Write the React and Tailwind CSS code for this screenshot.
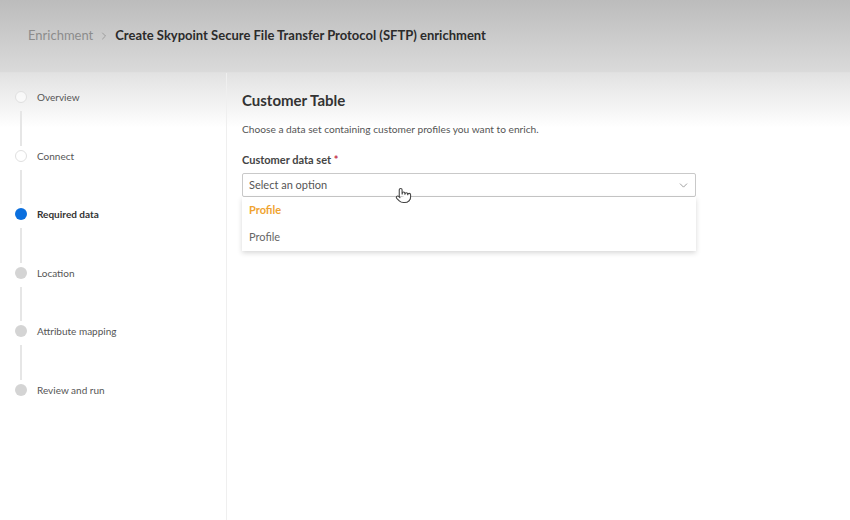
import React from "react";
import { ChevronDown, ChevronRight, Pointer } from "lucide-react";

const steps = [
  { label: "Overview", state: "done" },
  { label: "Connect", state: "done" },
  { label: "Required data", state: "active" },
  { label: "Location", state: "todo" },
  { label: "Attribute mapping", state: "todo" },
  { label: "Review and run", state: "todo" },
];

const StepDot = ({ state }) => {
  if (state === "active") {
    return <div className="h-3 w-3 shrink-0 rounded-full bg-[#0b6fde]" />;
  }
  if (state === "done") {
    return <div className="h-3 w-3 shrink-0 rounded-full border border-[#e0e0e0] bg-white/60" />;
  }
  return <div className="h-3 w-3 shrink-0 rounded-full bg-[#d4d4d4]" />;
};

const Stepper = () => (
  <aside className="w-[227px] shrink-0 border-r border-[#efefef] pl-[15px] pt-[18px]">
    {steps.map((step, i) => (
      <div key={step.label} className="flex h-[58.6px] gap-[10px]">
        <div className="flex w-3 flex-col items-center">
          <StepDot state={step.state} />
          {i < steps.length - 1 && (
            <div className="mt-[8px] mb-[4px] w-[2px] flex-1 bg-[#e6e6e6]" />
          )}
        </div>
        <span
          className={
            "text-[10px] leading-[13px] " +
            (step.state === "active" ? "font-bold text-[#333]" : "text-[#555]")
          }
        >
          {step.label}
        </span>
      </div>
    ))}
  </aside>
);

const CustomerTable = () => (
  <main className="flex-1 pl-[15px] pr-[154px] pt-[17px]">
    <h2 className="text-[15px] font-bold leading-[20px] text-[#333]">Customer Table</h2>
    <p className="mt-[12px] text-[10.2px] leading-[14px] text-[#555]">
      Choose a data set containing customer profiles you want to enrich.
    </p>
    <label className="mt-[17px] block text-[11px] font-bold leading-[14px] text-[#444]">
      Customer data set <span className="text-[#c4314b]">*</span>
    </label>
    <div className="relative mt-[6px]">
      <div className="flex h-[24px] items-center justify-between rounded-[2px] border border-[#c9c9c9] bg-white pl-[6px] pr-[5px]">
        <span className="text-[11px] text-[#555]">Select an option</span>
        <ChevronDown size={13} strokeWidth={1.5} className="text-[#8a8a8a]" />
      </div>
      <ul className="bg-white shadow-[0_2px_5px_rgba(0,0,0,0.16)]">
        <li className="flex h-[27px] items-center pl-[7px] text-[11px] font-bold text-[#f0a431]">
          Profile
        </li>
        <li className="flex h-[27px] items-center pl-[7px] text-[11px] text-[#666]">Profile</li>
      </ul>
      <Pointer
        size={17}
        strokeWidth={1.5}
        className="pointer-events-none absolute left-[153px] top-[14px] fill-white text-[#444]"
      />
    </div>
  </main>
);

export default function App() {
  return (
    <div className="flex h-[520px] w-[850px] flex-col overflow-hidden bg-white font-['Lato',sans-serif]">
      <header className="flex h-[73px] shrink-0 items-center border-b border-[#e0e0e0] bg-[linear-gradient(to_bottom,#bcbcbc,#dadada)] pl-[28px]">
        <span className="text-[13px] text-[#8c8c8c]">Enrichment</span>
        <ChevronRight size={12} strokeWidth={1.5} className="mx-[5px] text-[#8c8c8c]" />
        <span className="text-[13px] font-bold text-[#2b2b2b]">
          Create Skypoint Secure File Transfer Protocol (SFTP) enrichment
        </span>
      </header>
      <div className="flex flex-1 bg-[linear-gradient(to_bottom,#e2e2e2,#ffffff_55px)]">
        <Stepper />
        <CustomerTable />
      </div>
    </div>
  );
}
